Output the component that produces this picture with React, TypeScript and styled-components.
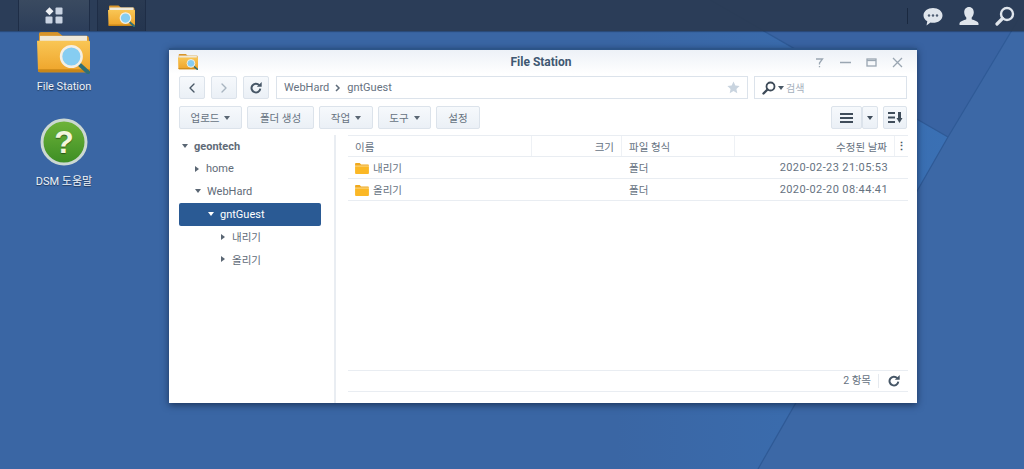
import React from "react";
import styled, { createGlobalStyle } from "styled-components";
import { ChevronLeft, ChevronRight } from "lucide-react";

const Global = createGlobalStyle`
  html, body { margin: 0; padding: 0; height: 100%; overflow: hidden; }
  body { font-family: "Roboto", "Noto Sans CJK KR", sans-serif; }
`;

const Desktop = styled.div`
  position: relative;
  width: 1024px;
  height: 469px;
  overflow: hidden;
  background: #3a66a4;
`;

const Wallpaper = styled.svg`
  position: absolute;
  inset: 0;
`;

const Taskbar = styled.header`
  position: relative;
  z-index: 2;
  display: flex;
  align-items: stretch;
  height: 31px;
  padding-left: 18px;
  background: rgba(42, 58, 82, 0.93);
  box-shadow: 0 1px 1px rgba(20, 35, 60, 0.4);
`;

const TaskButton = styled.div<{ $w: number; $active?: boolean }>`
  width: ${(p) => p.$w}px;
  margin-right: 7px;
  box-sizing: border-box;
  display: flex;
  align-items: center;
  justify-content: center;
  background: ${(p) => (p.$active ? "linear-gradient(#3a4a60, #2c3e5a)" : "linear-gradient(#2a3a52, #24354f)")};
  border-left: 1px solid #1e2d46;
  border-right: 1px solid #1e2d46;
`;

const Tray = styled.div`
  margin-left: auto;
  display: flex;
  align-items: center;
  gap: 16px;
  margin-top: 8px;
  margin-bottom: 7px;
  padding: 0 9px 0 15px;
  border-left: 1px solid #1a2940;
`;

const Icons = styled.div`
  position: absolute;
  z-index: 1;
  left: 22px;
  top: 29px;
  width: 84px;
  display: flex;
  flex-direction: column;
  align-items: center;
`;

const DesktopIcon = styled.div<{ $h: number }>`
  height: ${(p) => p.$h}px;
  display: flex;
  flex-direction: column;
  align-items: center;
  gap: 6px;
  color: #eef3f9;
  font-size: 11px;
  text-shadow: 0 1px 1px rgba(0, 0, 0, 0.45);
  white-space: nowrap;
`;

const Window = styled.section`
  position: absolute;
  left: 169px;
  top: 48px;
  width: 748px;
  height: 355px;
  display: flex;
  flex-direction: column;
  background: #fff;
  border-top: 2px solid #2c5488;
  box-sizing: border-box;
  box-shadow: 0 2px 7px rgba(10, 25, 50, 0.65);
  color: #556270;
  font-size: 11px;
`;

const TitleBar = styled.div`
  position: relative;
  height: 24px;
  flex: none;
  display: flex;
  align-items: center;
  justify-content: center;
  background: linear-gradient(#edf1f7, #fff);
`;

const Title = styled.div`
  margin-right: 4px;
  font-size: 12px;
  font-weight: 700;
  color: #405872;
`;

const TitleIcon = styled.div`
  position: absolute;
  left: 9px;
  top: 3px;
`;

const WinControls = styled.div`
  position: absolute;
  right: 14px;
  top: 7px;
  display: flex;
  gap: 15px;
`;

const Toolbar = styled.div<{ $top: number }>`
  display: flex;
  align-items: stretch;
  height: 23px;
  flex: none;
  margin-top: ${(p) => p.$top}px;
  padding: 0 10px;
`;

const ToolButton = styled.div<{ $w: number; $gap?: number }>`
  width: ${(p) => p.$w}px;
  margin-right: ${(p) => p.$gap ?? 5}px;
  box-sizing: border-box;
  display: flex;
  align-items: center;
  justify-content: center;
  gap: 5px;
  background: linear-gradient(#f6f9fc, #ebf0f6);
  border: 1px solid #dce3eb;
  border-radius: 2px;
  color: #66727f;
  font-size: 10.5px;
`;

const Caret = styled.i<{ $color?: string; $right?: boolean }>`
  display: inline-block;
  width: 0;
  height: 0;
  ${(p) =>
    p.$right
      ? `margin-right: 1px; border-top: 3px solid transparent; border-bottom: 3px solid transparent; border-left: 4px solid ${p.$color ?? "#5a6673"};`
      : `border-left: 3px solid transparent; border-right: 3px solid transparent; border-top: 4px solid ${p.$color ?? "#5a6673"};`}
`;

const PathBar = styled.div`
  width: 472px;
  margin-right: 6px;
  box-sizing: border-box;
  display: flex;
  align-items: center;
  justify-content: space-between;
  padding: 0 7px;
  border: 1px solid #dce3eb;
  font-size: 11px;
  color: #66727f;
`;

const Crumbs = styled.div`
  display: flex;
  align-items: center;
  gap: 6px;
`;

const SearchBox = styled.div`
  flex: 1;
  box-sizing: border-box;
  display: flex;
  align-items: center;
  gap: 2px;
  padding-left: 7px;
  border: 1px solid #dce3eb;
  font-size: 10px;
  color: #a5b0bc;
`;

const Spacer = styled.div`
  flex: 1;
`;

const Body = styled.div`
  flex: 1;
  min-height: 0;
  display: flex;
  margin-top: 6px;
`;

const Tree = styled.nav`
  width: 167px;
  flex: none;
  box-sizing: border-box;
  padding: 0 13px 0 10px;
  border-right: 2px solid #e9edf2;
`;

const TreeRow = styled.div<{ $depth: number; $selected?: boolean; $bold?: boolean; $ko?: boolean }>`
  height: ${(p) => (p.$selected ? 23 : 22.5)}px;
  display: flex;
  align-items: center;
  gap: 6px;
  padding-left: ${(p) => 3 + p.$depth * 13}px;
  border-radius: 2px;
  font-size: ${(p) => (p.$ko ? 10.5 : 11)}px;
  font-weight: ${(p) => (p.$bold ? 700 : 400)};
  background: ${(p) => (p.$selected ? "#2a5a94" : "transparent")};
  color: ${(p) => (p.$selected ? "#fff" : "#5f6b78")};
`;

const Pane = styled.div`
  flex: 1;
  min-width: 0;
  display: flex;
  flex-direction: column;
  padding: 0 9px 11px 12px;
`;

const Grid = styled.div`
  display: grid;
  grid-template-columns: 184px 90px 113px 160px 13px;
  height: 22px;
  box-sizing: border-box;
  align-items: stretch;
  border-bottom: 1px solid #e9edf2;
`;

const HeaderGrid = styled(Grid)`
  border-top: 1px solid #e9edf2;
`;

const Cell = styled.div<{ $right?: boolean; $date?: boolean }>`
  display: flex;
  align-items: center;
  justify-content: ${(p) => (p.$right ? "flex-end" : "flex-start")};
  gap: 4px;
  padding: 0 7px;
  font-size: ${(p) => (p.$date ? "11px" : "10.5px")};
  color: #66727f;
  min-width: 0;
  white-space: nowrap;
  letter-spacing: ${(p) => (p.$date ? "0.4px" : "0")};
`;

const HeadCell = styled(Cell)<{ $line?: boolean }>`
  border-right: ${(p) => (p.$line ? "1px solid #eef1f5" : "none")};
`;

const MenuCell = styled.div`
  display: flex;
  align-items: center;
  justify-content: center;
  font-weight: 700;
  font-size: 11px;
  color: #4a5866;
`;

const Footer = styled.div`
  margin-top: auto;
  height: 22px;
  box-sizing: border-box;
  flex: none;
  display: flex;
  align-items: center;
  justify-content: flex-end;
  border-top: 1px solid #e9edf2;
  border-bottom: 1px solid #e9edf2;
`;

const Count = styled.div`
  padding-right: 7px;
  height: 14px;
  line-height: 14px;
  font-size: 10.5px;
  border-right: 1px solid #e6eaef;
  color: #66727f;
`;

const FooterIcon = styled.div`
  width: 29px;
  display: flex;
  justify-content: center;
`;

const RefreshIcon = () => (
  <svg width="12" height="12" viewBox="0 0 12 12">
    <path d="M9.2 3.1A4.4 4.4 0 1 0 10.3 6.6" fill="none" stroke="#465666" strokeWidth="2" />
    <path d="M6.8 4.7h4.9V0z" fill="#465666" />
  </svg>
);

const SmallFolder = () => (
  <svg width="14" height="12" viewBox="0 0 15 13">
    <path d="M0 2a1 1 0 0 1 1-1h4l1.500 1.600H14a1 1 0 0 1 1 1V4H0z" fill="#f0a91c" />
    <path d="M0 4.600h15V12a1 1 0 0 1-1 1H1a1 1 0 0 1-1-1z" fill="#fbb826" />
  </svg>
);

const StationIcon = ({ size, id }: { size: number; id: string }) => (
  <svg width={size} height={(size * 46) / 54} viewBox="0 0 54 46">
    <defs>
      <linearGradient id={id} x1="0" y1="0" x2="0" y2="1">
        <stop offset="0" stopColor="#f9c655" />
        <stop offset="1" stopColor="#eea42a" />
      </linearGradient>
    </defs>
    <path d="M2 5a2 2 0 0 1 2-2h17l5 4h24a3 3 0 0 1 3 3v6H2z" fill="#d8952a" />
    <rect x="3" y="7" width="48" height="7" fill="#efe9da" />
    <path d="M0 12h53a1 1 0 0 1 1 1v29a2 2 0 0 1-2 2H3a2 2 0 0 1-2-2z" fill={`url(#${id})`} />
    <path d="M1 41h53v1a2 2 0 0 1-2 2H3a2 2 0 0 1-2-2z" fill="#c98719" />
    <path d="M43 36l9 8" stroke="#2f6f77" strokeWidth="4" strokeLinecap="round" />
    <circle cx="35" cy="28" r="10.5" fill="#86cdf1" stroke="#f4efe4" strokeWidth="2.5" />
  </svg>
);

const App = () => (
  <Desktop>
    <Global />
    <Wallpaper width="1024" height="469" viewBox="0 0 1024 469">
      <defs>
        <linearGradient id="wallLeft" x1="0" y1="0" x2="1" y2="0">
          <stop offset="0.65" stopColor="#3a66a4" />
          <stop offset="1" stopColor="#3a70b4" />
        </linearGradient>
      </defs>
      <path d="M0 0H710L948 137L758 469H0Z" fill="url(#wallLeft)" />
      <path d="M710 0H1030L948 137Z" fill="#3963a2" />
      <path d="M1030 0L948 137L758 469H1024V0Z" fill="#3c68a6" />
      <path d="M710 0L948 137M1030 0L948 137L758 469" fill="none" stroke="#2f5a96" strokeWidth="1.2" />
    </Wallpaper>

    <Taskbar>
      <TaskButton $w={72} $active>
        <svg width="18" height="17" viewBox="0 0 18 17">
          <path d="M4.5 0.300l4 4-4 4-4-4z" fill="#eef1f5" />
          <rect x="10.5" y="0.500" width="7" height="7" rx="1" fill="#c9d3e2" />
          <rect x="0.5" y="9.500" width="7" height="7" rx="1" fill="#c9d3e2" />
          <rect x="10.5" y="9.500" width="7" height="7" rx="1" fill="#c9d3e2" />
        </svg>
      </TaskButton>
      <TaskButton $w={49}>
        <StationIcon size={27} id="folderTask" />
      </TaskButton>
      <Tray>
        <svg width="20" height="19" viewBox="0 0 20 19">
          <path d="M10 1c5.200 0 9.500 3.200 9.500 7.400S15.200 15.800 10 15.800c-.9 0-1.700-.1-2.500-.3L3.500 18.400l.8-4.200C2 12.900.5 10.800.5 8.400.5 4.200 4.800 1 10 1z" fill="#dfe5ec" />
          <circle cx="6" cy="8.500" r="1.200" fill="#4d5d72" />
          <circle cx="10" cy="8.500" r="1.200" fill="#4d5d72" />
          <circle cx="14" cy="8.500" r="1.200" fill="#4d5d72" />
        </svg>
        <svg width="20" height="19" viewBox="0 0 20 19">
          <path d="M10 0c3 0 4.800 2.300 4.800 5.300 0 2.100-.9 4-2.100 5.100v1.800c2.500 1 6.600 2 6.800 4.300V18H.5v-1.500c.2-2.300 4.300-3.300 6.800-4.300v-1.800C6.100 9.300 5.200 7.400 5.200 5.300 5.200 2.300 7 0 10 0z" fill="#dfe5ec" />
        </svg>
        <svg width="20" height="20" viewBox="0 0 20 20">
          <circle cx="12" cy="8" r="6" fill="none" stroke="#dfe5ec" strokeWidth="2.4" />
          <path d="M7.500 12.500L2 18" stroke="#dfe5ec" strokeWidth="3.2" strokeLinecap="round" />
        </svg>
      </Tray>
    </Taskbar>

    <Icons>
      <DesktopIcon $h={89}>
        <StationIcon size={53} id="folderDesk" />
        <span>File Station</span>
      </DesktopIcon>
      <DesktopIcon $h={80}>
        <svg width="48" height="48" viewBox="0 0 48 48">
          <defs>
            <linearGradient id="help" x1="0" y1="0" x2="0" y2="1">
              <stop offset="0" stopColor="#6fb43a" />
              <stop offset="1" stopColor="#3c8d24" />
            </linearGradient>
          </defs>
          <circle cx="24" cy="24" r="22" fill="url(#help)" stroke="#ccd8d2" strokeWidth="3" />
          <text x="24" y="35" textAnchor="middle" fontFamily="Liberation Sans" fontWeight="700" fontSize="32" fill="#f4f5dc">?</text>
        </svg>
        <span>DSM 도움말</span>
      </DesktopIcon>
    </Icons>

    <Window>
      <TitleBar>
        <TitleIcon>
          <StationIcon size={20} id="folderTitle" />
        </TitleIcon>
        <Title>File Station</Title>
        <WinControls>
          <svg width="11" height="11" viewBox="0 0 11 11" fill="none" stroke="#9aa6b2" strokeWidth="1.3">
            <path d="M2 2h6.500L5.500 6v1.500M5.500 9v1.200" />
          </svg>
          <svg width="11" height="11" viewBox="0 0 11 11" stroke="#9aa6b2" strokeWidth="1.5">
            <path d="M0 5.500h11" />
          </svg>
          <svg width="11" height="11" viewBox="0 0 11 11" fill="none" stroke="#9aa6b2" strokeWidth="1.3">
            <rect x="1" y="2" width="9" height="7" />
            <path d="M1 3.500h9" />
          </svg>
          <svg width="11" height="11" viewBox="0 0 11 11" stroke="#9aa6b2" strokeWidth="1.3">
            <path d="M1 1l9 9M10 1l-9 9" />
          </svg>
        </WinControls>
      </TitleBar>

      <Toolbar $top={2}>
        <ToolButton $w={26} $gap={6}><ChevronLeft size={16} color="#4a5866" /></ToolButton>
        <ToolButton $w={26} $gap={6}><ChevronRight size={16} color="#a8b4c0" /></ToolButton>
        <ToolButton $w={26} $gap={7}><RefreshIcon /></ToolButton>
        <PathBar>
          <Crumbs>
            WebHard
            <svg width="6" height="8" viewBox="0 0 6 8" fill="none" stroke="#5f6c7a" strokeWidth="1.5"><path d="M1 1l3 3-3 3" /></svg>
            gntGuest
          </Crumbs>
          <svg width="13" height="13" viewBox="0 0 24 24" fill="#c9d4df"><path d="M12 1l3.400 7.300 7.900.9-5.900 5.400 1.600 7.900L12 18.600l-7 3.900 1.600-7.900L.7 9.200l7.900-.9z" /></svg>
        </PathBar>
        <SearchBox>
          <svg width="14" height="14" viewBox="0 0 14 14" fill="none" stroke="#3d4a58">
            <circle cx="8.500" cy="5.500" r="4" strokeWidth="1.8" />
            <path d="M5.500 8.500L1.500 12.500" strokeWidth="2.4" strokeLinecap="round" />
          </svg>
          <Caret $color="#4a5866" />
          <span>검색</span>
        </SearchBox>
      </Toolbar>

      <Toolbar $top={7}>
        <ToolButton $w={63} $gap={5}>업로드 <Caret /></ToolButton>
        <ToolButton $w={67} $gap={5}>폴더 생성</ToolButton>
        <ToolButton $w={54} $gap={5}>작업 <Caret /></ToolButton>
        <ToolButton $w={53} $gap={5}>도구 <Caret /></ToolButton>
        <ToolButton $w={44} $gap={5}>설정</ToolButton>
        <Spacer />
        <ToolButton $w={31} $gap={0}>
          <svg width="13" height="10" viewBox="0 0 13 10" fill="#3f4c5a"><rect width="13" height="2" /><rect y="4" width="13" height="2" /><rect y="8" width="13" height="2" /></svg>
        </ToolButton>
        <ToolButton $w={16} $gap={5}><Caret $color="#3f4c5a" /></ToolButton>
        <ToolButton $w={24} $gap={0}>
          <svg width="15" height="11" viewBox="0 0 15 11" fill="#3f4c5a">
            <rect width="7" height="2" /><rect y="4.500" width="7" height="2" /><rect y="9" width="7" height="2" />
            <rect x="10" width="3" height="7" /><path d="M8.500 6h6l-3 5z" />
          </svg>
        </ToolButton>
      </Toolbar>

      <Body>
        <Tree>
          <TreeRow $depth={0} $bold><Caret />geontech</TreeRow>
          <TreeRow $depth={1}><Caret $right />home</TreeRow>
          <TreeRow $depth={1}><Caret />WebHard</TreeRow>
          <TreeRow $depth={2} $selected><Caret $color="#fff" />gntGuest</TreeRow>
          <TreeRow $depth={3} $ko><Caret $right />내리기</TreeRow>
          <TreeRow $depth={3} $ko><Caret $right />올리기</TreeRow>
        </Tree>
        <Pane>
          <HeaderGrid>
            <HeadCell $line>이름</HeadCell>
            <HeadCell $right $line>크기</HeadCell>
            <HeadCell $line>파일 형식</HeadCell>
            <HeadCell $right $line>수정된 날짜</HeadCell>
            <MenuCell>⋮</MenuCell>
          </HeaderGrid>
          <Grid>
            <Cell><SmallFolder />내리기</Cell>
            <Cell />
            <Cell>폴더</Cell>
            <Cell $right $date>2020-02-23 21:05:53</Cell>
            <Cell />
          </Grid>
          <Grid>
            <Cell><SmallFolder />올리기</Cell>
            <Cell />
            <Cell>폴더</Cell>
            <Cell $right $date>2020-02-20 08:44:41</Cell>
            <Cell />
          </Grid>
          <Footer>
            <Count>2 항목</Count>
            <FooterIcon><RefreshIcon /></FooterIcon>
          </Footer>
        </Pane>
      </Body>
    </Window>
  </Desktop>
);

export default App;
